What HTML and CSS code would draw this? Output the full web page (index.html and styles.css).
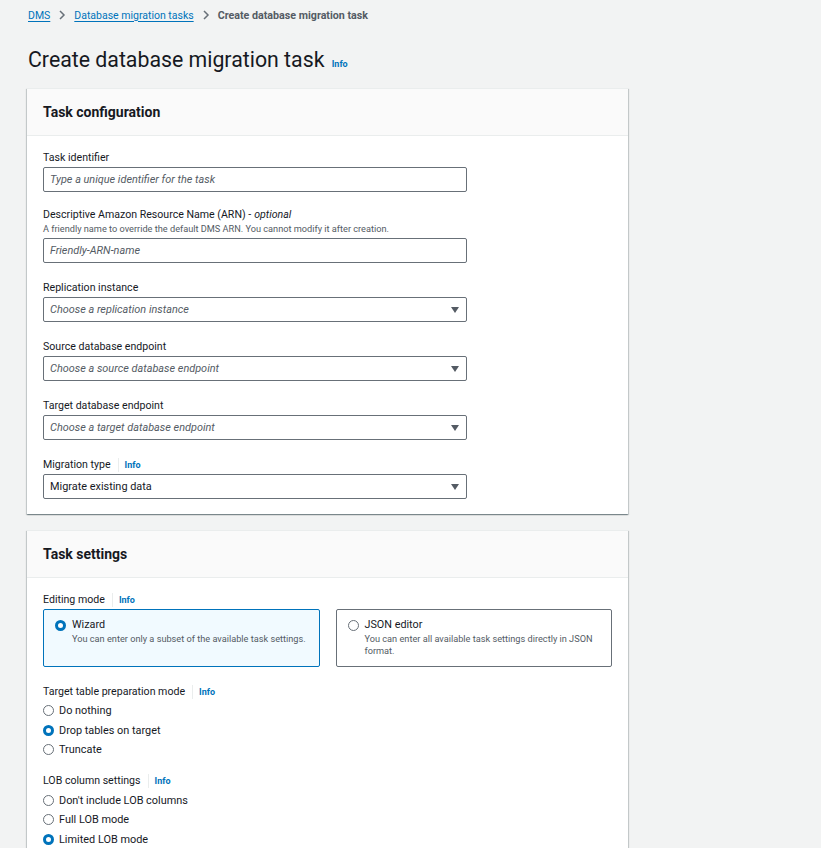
FILE: index.html
```html
<!DOCTYPE html>
<html>
<head>
<meta charset="utf-8">
<link rel="stylesheet" href="styles.css">
</head>
<body>
<div class="page">
  <nav class="crumbs">
    <a class="crumb-link" href="#">DMS</a>
    <svg class="chev" width="8" height="10" viewBox="0 0 8 10"><path d="M2 1l4 4-4 4" fill="none" stroke="#687078" stroke-width="1.5"/></svg>
    <a class="crumb-link" href="#">Database migration tasks</a>
    <svg class="chev" width="8" height="10" viewBox="0 0 8 10"><path d="M2 1l4 4-4 4" fill="none" stroke="#687078" stroke-width="1.5"/></svg>
    <span class="crumb-current">Create database migration task</span>
  </nav>

  <h1 class="page-title">Create database migration task <a class="info title-info" href="#">Info</a></h1>

  <section class="card">
    <div class="card-head"><h2>Task configuration</h2></div>
    <div class="card-body">
      <div class="field first">
        <label class="label">Task identifier</label>
        <div class="input placeholder">Type a unique identifier for the task</div>
      </div>
      <div class="field">
        <label class="label">Descriptive Amazon Resource Name (ARN) - <i>optional</i></label>
        <div class="desc">A friendly name to override the default DMS ARN. You cannot modify it after creation.</div>
        <div class="input placeholder">Friendly-ARN-name</div>
      </div>
      <div class="field">
        <label class="label">Replication instance</label>
        <div class="input select placeholder">Choose a replication instance<span class="caret"></span></div>
      </div>
      <div class="field">
        <label class="label">Source database endpoint</label>
        <div class="input select placeholder">Choose a source database endpoint<span class="caret"></span></div>
      </div>
      <div class="field">
        <label class="label">Target database endpoint</label>
        <div class="input select placeholder">Choose a target database endpoint<span class="caret"></span></div>
      </div>
      <div class="field">
        <label class="label">Migration type<span class="sep"></span><a class="info" href="#">Info</a></label>
        <div class="input select">Migrate existing data<span class="caret"></span></div>
      </div>
    </div>
  </section>

  <section class="card">
    <div class="card-head"><h2>Task settings</h2></div>
    <div class="card-body">
      <div class="field">
        <label class="label">Editing mode<span class="sep"></span><a class="info" href="#">Info</a></label>
        <div class="tiles">
          <div class="tile selected">
            <span class="radio on"></span>
            <div class="tile-text">
              <div class="tile-title">Wizard</div>
              <div class="tile-desc">You can enter only a subset of the available task settings.</div>
            </div>
          </div>
          <div class="tile">
            <span class="radio"></span>
            <div class="tile-text">
              <div class="tile-title">JSON editor</div>
              <div class="tile-desc">You can enter all available task settings directly in JSON format.</div>
            </div>
          </div>
        </div>
      </div>
      <div class="field">
        <label class="label">Target table preparation mode<span class="sep"></span><a class="info" href="#">Info</a></label>
        <div class="radios">
          <div class="radio-row"><span class="radio"></span>Do nothing</div>
          <div class="radio-row"><span class="radio on"></span>Drop tables on target</div>
          <div class="radio-row"><span class="radio"></span>Truncate</div>
        </div>
      </div>
      <div class="field">
        <label class="label">LOB column settings<span class="sep"></span><a class="info" href="#">Info</a></label>
        <div class="radios">
          <div class="radio-row"><span class="radio"></span>Don't include LOB columns</div>
          <div class="radio-row"><span class="radio"></span>Full LOB mode</div>
          <div class="radio-row"><span class="radio on"></span>Limited LOB mode</div>
        </div>
      </div>
    </div>
  </section>
</div>
</body>
</html>
```

FILE: styles.css
```css
* { box-sizing: border-box; }
html, body { margin: 0; padding: 0; }
body {
  background: #f2f3f3;
  font-family: Roboto, "Liberation Sans", sans-serif;
  color: #16191f;
  font-size: 10.6px;
}
.page {
  padding: 7px 193px 0 27px;
}
.crumbs {
  display: flex;
  align-items: center;
  gap: 8px;
  height: 16px;
  padding-left: 1px;
  font-size: 10.5px;
}
.crumb-link {
  color: #0073bb;
  text-decoration: underline;
  text-underline-offset: 2px;
}
.crumb-current {
  color: #545b64;
  font-weight: 700;
  font-size: 10.7px;
}
.chev { display: block; }
.page-title {
  margin: 25px 0 0 1px;
  font-size: 21.3px;
  font-weight: 400;
  line-height: 24px;
  height: 24px;
}
.info {
  color: #0073bb;
  font-weight: 700;
  font-size: 9px;
  text-decoration: none;
}
.title-info { margin-left: 2px; }
.card {
  background: #fff;
  border-top: 1px solid #eaeded;
  box-shadow: 0 1px 1px 0 rgba(0,28,36,.3), 1px 1px 1px 0 rgba(0,28,36,.15), -1px 1px 1px 0 rgba(0,28,36,.15);
  margin-top: 16px;
  width: 601px;
}
.card + .card { margin-top: 16px; }
.card-head {
  background: #fafafa;
  border-bottom: 1px solid #eaeded;
  height: 47px;
  display: flex;
  align-items: center;
  padding: 0 16px 1px;
}
.card-head h2 {
  margin: 0;
  font-size: 14px;
  font-weight: 700;
}
.card-body {
  padding: 13px 16px 15px;
  display: flex;
  flex-direction: column;
  gap: 16px;
}
.field { display: flex; flex-direction: column; }
.field.first { margin-bottom: -2px; }
.label {
  display: flex;
  align-items: center;
  line-height: 14px;
  height: 16px;
  padding-top: 1.5px;
  margin-bottom: 2px;
}
.label i { margin-left: 3px; }
.sep {
  display: inline-block;
  width: 1px;
  height: 14px;
  background: #eaeded;
  margin: 0 6px 0 7px;
}
.desc {
  font-size: 9.2px;
  color: #545b64;
  line-height: 12px;
  margin: -1px 0 3px;
}
.input {
  width: 424px;
  height: 25px;
  border: 1px solid #687078;
  border-radius: 2px;
  padding: 0 6px;
  display: flex;
  align-items: center;
  font-size: 10.9px;
  position: relative;
}
.placeholder { color: #545b64; font-style: italic; }
.caret {
  position: absolute;
  right: 7px;
  top: 9px;
  width: 0;
  height: 0;
  border-left: 4.5px solid transparent;
  border-right: 4.5px solid transparent;
  border-top: 6px solid #545b64;
}
.tiles {
  display: grid;
  grid-template-columns: 1fr 1fr;
  gap: 16px;
}
.tile {
  height: 58px;
  border: 1px solid #687078;
  border-radius: 2px;
  padding: 8px 11px;
  display: flex;
  gap: 6px;
  align-items: flex-start;
}
.tile.selected {
  background: #f1faff;
  border-color: #0073bb;
}
.tile .radio { margin-top: 2px; }
.tile-title { line-height: 14px; font-size: 10.8px; }
.tile-desc {
  font-size: 9.2px;
  color: #545b64;
  line-height: 12px;
  margin-top: 1px;
}
.radio {
  flex: none;
  display: inline-block;
  width: 11px;
  height: 11px;
  border-radius: 50%;
  border: 1px solid #687078;
  background: #fff;
}
.radio.on {
  border: 3.5px solid #0073bb;
}
.radios {
  display: flex;
  flex-direction: column;
  margin-top: 0;
  margin-bottom: -3px;
}
.radio-row {
  display: flex;
  align-items: center;
  gap: 5px;
  height: 19.5px;
  font-size: 10.9px;
}
```
